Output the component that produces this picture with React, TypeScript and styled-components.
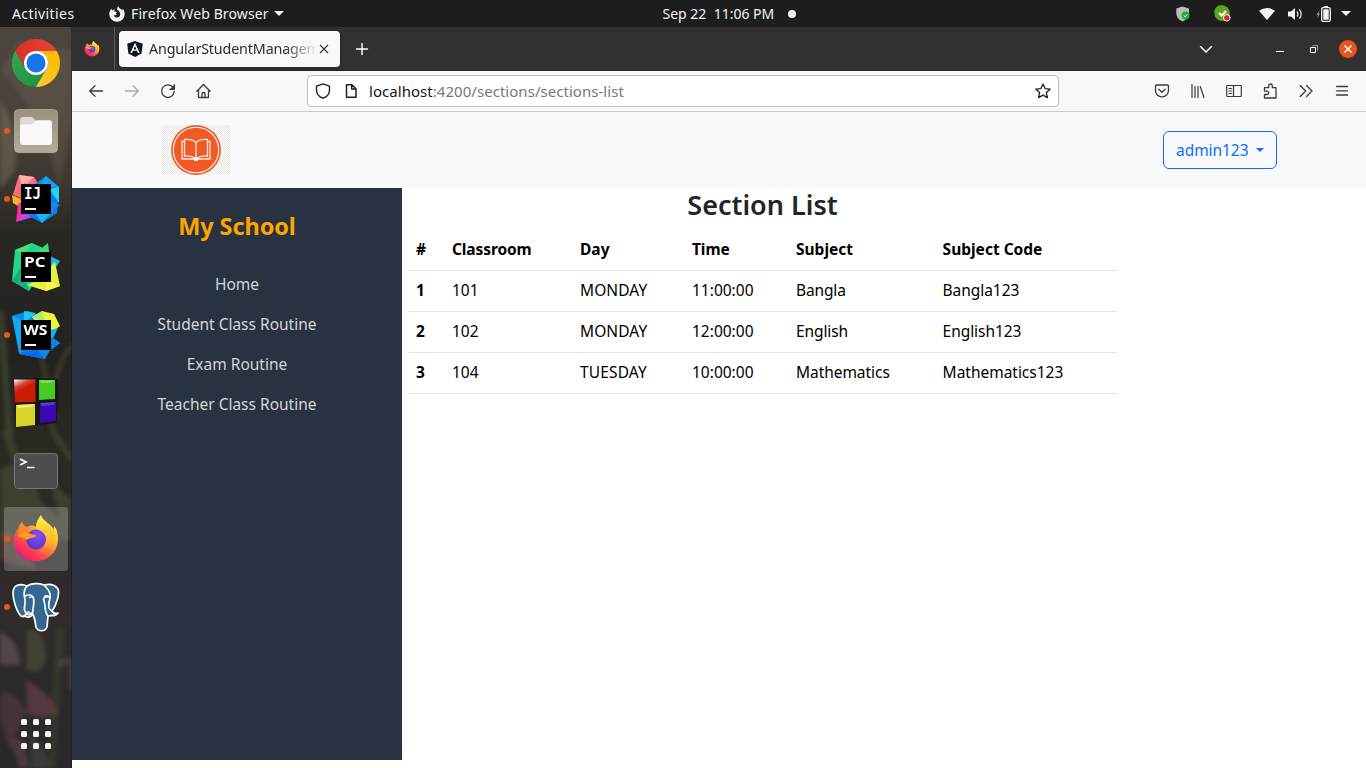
import React from 'react';
import styled, { createGlobalStyle } from 'styled-components';

const GlobalStyle = createGlobalStyle`
  *, *::before, *::after { box-sizing: border-box; }
  body {
    margin: 0;
    overflow: hidden;
    font-family: "Noto Sans", "Open Sans", sans-serif;
    font-size: 15.5px;
    color: #212529;
  }
  svg { display: block; flex: none; }
`;

/* ---------- shell ---------- */

const Desktop = styled.div`
  width: 1366px;
  height: 768px;
  display: flex;
  flex-direction: column;
  background: #fff;
`;

const Workspace = styled.div`
  flex: 1;
  display: flex;
  min-height: 0;
`;

const Label = styled.span<{ $w?: number; $track?: number }>`
  display: block;
  flex: none;
  white-space: pre;
  width: ${(p) => (p.$w ? `${p.$w}px` : 'auto')};
  letter-spacing: ${(p) => p.$track ?? 0}px;
`;

const Spacer = styled.div`
  flex: 1;
`;

/* ---------- top panel ---------- */

const TopPanel = styled.header`
  height: 27px;
  flex: none;
  display: grid;
  grid-template-columns: 1fr auto 1fr;
  align-items: center;
  background: #1d1d1d;
  color: #f2f2f2;
  font-size: 14px;
  line-height: 26px;
`;

const PanelGroup = styled.div<{ $end?: boolean }>`
  display: flex;
  align-items: center;
  justify-content: ${(p) => (p.$end ? 'flex-end' : 'flex-start')};
  padding: ${(p) => (p.$end ? '0 15px 0 0' : '0 0 0 12px')};
`;

const Clock = styled.div`
  display: flex;
  align-items: center;
  padding-left: 92px;
`;

const NoticeDot = styled.i`
  width: 8px;
  height: 8px;
  margin-left: 13px;
  border-radius: 50%;
  background: #f2f2f2;
`;

const Caret = styled.i<{ $size: number; $gap?: number }>`
  display: block;
  flex: none;
  margin-left: ${(p) => p.$gap ?? 0}px;
  border: ${(p) => p.$size}px solid transparent;
  border-top-color: currentColor;
  border-bottom: 0;
`;

const Gap = styled.div<{ $w: number }>`
  width: ${(p) => p.$w}px;
  flex: none;
`;

/* ---------- dock ---------- */

const Dock = styled.nav`
  position: relative;
  width: 72px;
  flex: none;
  display: flex;
  flex-direction: column;
  gap: 4px;
  padding: 4px 4px 2px;
  overflow: hidden;
  background: linear-gradient(#4b453f 0, #4a433c 12%, #3c3730 21%, #282722 28%, #22221f 45%, #2b2b22 58%, #292824 66%, #302c2c 80%, #2b282a 92%, #2a2828 100%);
`;

const Wallpaper = styled.svg`
  position: absolute;
  inset: 0;
`;

const DockItem = styled.div<{ $active?: boolean; $running?: boolean }>`
  position: relative;
  width: 64px;
  height: 64px;
  flex: none;
  display: flex;
  align-items: center;
  justify-content: center;
  border-radius: 3px;
  background: ${(p) => (p.$active ? 'rgba(255,255,255,.22)' : 'transparent')};

  &::before {
    content: '';
    display: ${(p) => (p.$running ? 'block' : 'none')};
    position: absolute;
    left: 0;
    top: 29px;
    width: 6px;
    height: 6px;
    border-radius: 50%;
    background: #e95420;
  }
`;

/* ---------- browser window ---------- */

const BrowserWindow = styled.main`
  flex: 1;
  display: flex;
  flex-direction: column;
  min-width: 0;
`;

const TabStrip = styled.div`
  height: 44px;
  flex: none;
  display: flex;
  align-items: center;
  background: #323031;
  border-bottom: 1px solid #262425;
  color: #fff;
`;

const PinnedTab = styled.div`
  width: 43px;
  height: 43px;
  flex: none;
  display: flex;
  align-items: center;
  padding-left: 12px;
  border-right: 1px solid #5b595a;
`;

const Tab = styled.div`
  width: 221px;
  height: 36px;
  flex: none;
  display: flex;
  align-items: center;
  margin-left: 4px;
  padding-left: 8px;
  border-radius: 4px;
  background: #f8f8f8;
  box-shadow: 0 0 3px rgba(0, 0, 0, .6);
`;

const TabTitle = styled.div`
  width: 168px;
  margin-left: 6px;
  overflow: hidden;
  white-space: nowrap;
  font-size: 14.3px;
  line-height: 22px;
  padding-top: 1px;
  color: #2b2a33;
  letter-spacing: -.15px;
  mask-image: linear-gradient(90deg, #000 136px, transparent 168px);
`;

const StripButtons = styled.div`
  display: flex;
  align-items: center;
  padding-right: 1px;
`;

const StripButton = styled.div<{ $w: number }>`
  width: ${(p) => p.$w}px;
  display: flex;
  justify-content: center;
`;

const Toolbar = styled.div`
  height: 41px;
  flex: none;
  display: flex;
  align-items: center;
  padding: 0 6px;
  background: #f8f8f8;
  border-bottom: 1px solid #ccc;
`;

const ToolButton = styled.div<{ $dim?: boolean }>`
  width: 36px;
  flex: none;
  display: flex;
  justify-content: center;
  color: #3a3a3f;
  opacity: ${(p) => (p.$dim ? 0.4 : 1)};
`;

const UrlBar = styled.div`
  width: 752px;
  height: 32px;
  flex: none;
  display: flex;
  align-items: center;
  margin-left: 85px;
  padding: 0 7px;
  border: 1px solid #bdbdbd;
  border-radius: 4px;
  background: #fff;
  font-size: 15px;
  color: #77777d;

  b {
    font-weight: 400;
    color: #15141a;
  }

  svg {
    color: #222;
  }
`;

/* ---------- page ---------- */

const PageHeader = styled.div`
  height: 76px;
  flex: none;
  display: flex;
  align-items: center;
  justify-content: space-between;
  padding: 0 89px;
  background: #f8f9fa;
`;

const UserButton = styled.button`
  width: 114px;
  height: 38px;
  display: flex;
  align-items: center;
  padding: 0 12px;
  border: 1px solid #0d6efd;
  border-radius: 6px;
  background: transparent;
  color: #0d6efd;
  font: inherit;
  text-align: left;
`;

const PageBody = styled.div`
  flex: 1;
  display: flex;
`;

const SideMenu = styled.aside`
  width: 330px;
  height: 572px;
  flex: none;
  display: flex;
  flex-direction: column;
  align-items: center;
  padding-top: 18px;
  background: #293241;
`;

const SchoolName = styled.h2`
  margin: 0 0 26px;
  font-size: 23.5px;
  line-height: 40px;
  font-weight: 700;
  letter-spacing: -.1px;
  color: orange;
`;

const MenuLink = styled.a`
  height: 40px;
  line-height: 24px;
  color: #d3d5d9;
`;

const Content = styled.section`
  width: 709px;
  margin-left: 6px;
`;

const Heading = styled.h3`
  margin: 0;
  height: 41px;
  line-height: 34px;
  text-align: center;
  font-size: 27px;
  font-weight: 600;
  letter-spacing: 0;
`;

const Row = styled.div<{ $head?: boolean }>`
  display: grid;
  grid-template-columns: 36px 128px 112px 104px 146.6px 1fr;
  height: ${(p) => (p.$head ? 42 : 41)}px;
  border-bottom: 1px solid #dee2e6;
  line-height: ${(p) => (p.$head ? 40 : 38)}px;
  color: #000;
  font-weight: ${(p) => (p.$head ? 700 : 400)};
`;

const Cell = styled.div<{ $bold?: boolean; $track?: number }>`
  padding-left: 8px;
  white-space: nowrap;
  font-weight: ${(p) => (p.$bold ? 700 : 'inherit')};
  letter-spacing: ${(p) => p.$track ?? 0}px;
`;

/* ---------- drawings ---------- */

const ChromeIcon = () => (
  <svg width="48" height="48" viewBox="0 0 48 48">
    <defs>
      <linearGradient id="chr" x1="0" x2="1"><stop stopColor="#d93025" /><stop offset="1" stopColor="#ea4335" /></linearGradient>
      <linearGradient id="chg" x1="1" y1="1" x2="0" y2="0"><stop stopColor="#1e8e3e" /><stop offset="1" stopColor="#34a853" /></linearGradient>
      <linearGradient id="chy" x1="0" y1="1" x2=".6" y2="0"><stop stopColor="#fcc934" /><stop offset="1" stopColor="#fbbc04" /></linearGradient>
    </defs>
    <path fill="url(#chr)" d="M24 12H44.78A24 24 0 0 0 3.215 12L13.6 30A12 12 0 0 1 24 12z" />
    <path fill="url(#chg)" d="M34.4 30L24 48A24 24 0 0 1 3.215 12L13.6 30A12 12 0 0 0 34.4 30z" />
    <path fill="url(#chy)" d="M34.4 30A12 12 0 0 0 24 12H44.78A24 24 0 0 1 24 48z" />
    <circle cx="24" cy="24" r="12" fill="#fff" />
    <circle cx="24" cy="24" r="9.5" fill="#1a73e8" />
  </svg>
);

const FilesIcon = () => (
  <svg width="46" height="46" viewBox="0 0 46 46">
    <defs>
      <linearGradient id="fl" x2="0" y2="1"><stop stopColor="#989180" /><stop offset="1" stopColor="#b1ab9a" /></linearGradient>
    </defs>
    <rect x="1" y="1.5" width="44" height="44" rx="4.5" fill="#4f4a40" />
    <rect x="1.5" y="1.5" width="43" height="43" rx="4" fill="url(#fl)" stroke="#c4bfb2" strokeOpacity=".6" />
    <path d="M7 11.5q0-2.500 2.500-2.500h9q1.500 0 2.500 1.500l1.500 2v6H7z" fill="#dedacf" />
    <path d="M7 18q0-1.800 2-1.800h8.500q1.500 0 2.500-1l2-2.200q.8-.8 2-.8h12.500q2.500 0 2.500 2.500V34q0 3-3 3H10q-3 0-3-3z" fill="#faf9f7" />
  </svg>
);

const IdeIcon = ({ name, children }: { name: string; children: React.ReactNode }) => (
  <svg width="48" height="48" viewBox="0 0 48 48">
    {children}
    <rect x="9" y="9" width="30" height="30" fill="#000" />
    <text
      x={name === 'WS' ? 11.5 : 12} y="23.500" fill="#fff" fontSize="15" fontWeight="700"
      fontFamily={name === 'IJ' ? '"DejaVu Sans Mono", monospace' : '"Open Sans", sans-serif'}
      textLength={name === 'IJ' ? 17 : name === 'PC' ? 21.5 : 24}
      lengthAdjust="spacingAndGlyphs"
    >
      {name}
    </text>
    <rect x="13" y="33" width="11" height="2" fill="#fff" />
  </svg>
);

const IntelliJ = () => (
  <IdeIcon name="IJ">
    <path d="M7 0L22 2 27 10 14 24 1 20z" fill="#fc6d8d" />
    <path d="M7 0L22 2 10 13z" fill="#ffb0a8" />
    <path d="M1 19L14 7 14 26z" fill="#fd6a6a" />
    <path d="M0 20L12 25 6 31 1 28z" fill="#fcb12c" />
    <path d="M6 29L12 26 26 40 4 47z" fill="#f52fa0" />
    <path d="M12 34L28 40 7 46z" fill="#b04cf5" />
    <path d="M24 8L34 1 47 12 45 38 30 48 17 41z" fill="#0a7ef0" />
    <path d="M34 1L47 12 36 12 28 9z" fill="#12a2ef" />
    <path d="M37 14L47 12 47 28z" fill="#22d3f5" />
    <path d="M38 25L48 30 36 40z" fill="#1c83f0" />
    <path d="M24 39L40 37 30 48z" fill="#19b6f1" />
  </IdeIcon>
);

const PyCharm = () => (
  <IdeIcon name="PC">
    <path d="M3 7L20 0 31 5 22 40 17 48 0 38z" fill="#21d789" />
    <path d="M3 7L20 0 12 12z" fill="#48e07b" />
    <path d="M0 38L9 24 17 48z" fill="#18ae80" />
    <path d="M25 9L36 0 38 16 26 14z" fill="#3ddc68" />
    <path d="M38 13L48 18 39 32z" fill="#14b9ed" />
    <path d="M39 23L43 19 48 43 34 48 15 42 24 38z" fill="#e4f33f" />
    <path d="M34 38L48 43 34 48z" fill="#fcf84a" />
  </IdeIcon>
);

const WebStorm = () => (
  <IdeIcon name="WS">
    <path d="M0 5L16 0 28 5 38 39 33 48 7 43z" fill="#0b8cef" />
    <path d="M0 5L12 10 8 43z" fill="#12aaf0" />
    <path d="M12 0L24 2 12 12z" fill="#17c9e8" />
    <path d="M7 43L24 37 33 48z" fill="#076de8" />
    <path d="M20 6L30 0 42 3 48 15 36 24z" fill="#ecf43d" />
    <path d="M20 6L30 0 33 12z" fill="#a5ec70" />
    <path d="M39 19L46 17 41 27 48 32 36 41z" fill="#12b4f0" />
    <path d="M39 26L48 32 36 41z" fill="#0a84ea" />
  </IdeIcon>
);

const BlocksIcon = () => (
  <svg width="48" height="50" viewBox="0 0 48 50">
    <defs>
      <linearGradient id="br" x2=".5" y2="1"><stop stopColor="#fff" /><stop offset=".32" stopColor="#d84434" /><stop offset=".5" stopColor="#cc1c08" /></linearGradient>
    </defs>
    <path d="M2 1L24 0 46 1 46 24 45 45 4 49z" fill="#17170f" />
    <path d="M2 1.500L23.500 1.500 23.500 24 3 24.500z" fill="url(#br)" />
    <path d="M27 2L43 2 43 21 27 22z" fill="#46cc20" />
    <path d="M27 2L43 2 39 5 30 5z" fill="#77dc55" />
    <path d="M4 27L23 26 23 47 4 49z" fill="#d8d52a" />
    <path d="M4 27L23 26 20 29 7 30z" fill="#eeec75" />
    <path d="M28 25L44 24 44 43 28 45z" fill="#3a08b8" />
    <path d="M28 25L44 24 41 27 30 28z" fill="#6038cc" />
  </svg>
);

const TerminalIcon = () => (
  <svg width="46" height="38" viewBox="0 0 46 38">
    <rect x="1" y="1" width="44" height="36" rx="3.500" fill="#2e2e2e" />
    <rect x="1.500" y="1.500" width="43" height="35" rx="3" fill="#4d4d4d" stroke="#777" />
    <path d="M7 7l6 3-6 3M14 15.500h7.500" fill="none" stroke="#fff" strokeWidth="1.700" />
  </svg>
);

const FirefoxIcon = ({ size, id }: { size: number; id: string }) => (
  <svg width={size} height={size} viewBox="0 1 48 48">
    <defs>
      <linearGradient id={`${id}a`} x1=".85" y1=".1" x2=".2" y2=".95">
        <stop stopColor="#fff44f" /><stop offset=".3" stopColor="#ffbd2a" /><stop offset=".55" stopColor="#ff7139" />
        <stop offset=".8" stopColor="#ff3750" /><stop offset="1" stopColor="#e31587" />
      </linearGradient>
      <radialGradient id={`${id}b`} cx=".6" cy=".25" r=".8">
        <stop stopColor="#8a4df0" /><stop offset=".5" stopColor="#7040e0" /><stop offset="1" stopColor="#5b2fce" />
      </radialGradient>
      <linearGradient id={`${id}c`} x1=".5" x2=".5" y2="1">
        <stop stopColor="#fff14c" /><stop offset=".5" stopColor="#ffc52e" /><stop offset="1" stopColor="#ff9a2c" stopOpacity="0" />
      </linearGradient>
    </defs>
    <path fill={`url(#${id}a)`} d="M29 1C27 5 24 8 24 13C20 10 17 12 15 13C12 12 11 11 10 8C8 10 7 12 6.500 14C3 18 1.500 22 1.800 27C2 39 12 47 24 47C37 47 46 37 46 25C46 20 45 15 42 12C42 14 42 15 42 16C40 10 30 7 29 1z" />
    <path fill={`url(#${id}c)`} d="M29 1C26 5 23 10 25 15C31 19 33 23 33 28C33 34 28 39 22 40C34 43 43 34 43.500 25C43.600 20 42 16 40.500 14C37 9 30 7 29 1z" />
    <circle cx="24" cy="25.500" r="10" fill={`url(#${id}b)`} />
    <path fill="#ff9a1f" d="M6.500 20C10 17 17 18 20 20.500C24 20.500 25 22 23 23C20 24 17 24.500 15 26C13 25 11 23 6.500 23z" />
    <path fill="#ff8a29" d="M10 8C11 11 13 13 16 13C14 14 13 16 13 18L6.500 20C5 17 8 11 10 8z" />
  </svg>
);

const PostgresIcon = () => (
  <svg width="50" height="50" viewBox="0 0 50 50" stroke="#fff" strokeWidth="1.700" strokeLinejoin="round" strokeLinecap="round">
    <path fill="#336791" d="M16 4C9 .8 2 3 2 11C2 19 6 30 10 34C13 36 15 33 17 30L22 33C24 36 24 40 25 45C27 50 34 50 36 45L37 34C40 33 45 35 47 31C44 32 42 31 41 29C45 24 49 12 47 7C43 1 37 2 33 3C28 1 20 1 16 4z" />
    <path fill="none" d="M16 4C12 8 13 13 14 18C15 24 11 26 15 31C17 34 21 33 22 29C22 24 24 18 22 15C20 12 16 12 13.500 15M33 3C38 8 41 12 38 20C37 25 38 28 41 29M38 15C34 12 32 16 33 19C35 24 33 30 37 34M13 34C17 36 21 35 22 32" />
    <path d="M18.500 15.300h1.500M34.500 15h1.500" strokeWidth="1.500" />
  </svg>
);

const AppsGrid = () => (
  <svg width="30" height="30" viewBox="0 0 30 30" fill="#f3f3f3">
    {[0, 12, 24].map((y) => [0, 12, 24].map((x) => <rect key={`${x}-${y}`} x={x} y={y} width="6" height="6" rx="1.500" />))}
  </svg>
);

const Line = ({ d, size = 16, w = 1.3, fill }: { d: string; size?: number; w?: number; fill?: string }) => (
  <svg width={size} height={size} viewBox={`0 0 ${size} ${size}`} fill="none" stroke="currentColor" strokeWidth={w} strokeLinecap="round" strokeLinejoin="round">
    <path d={d} />
    {fill && <path d={fill} fill="currentColor" stroke="none" />}
  </svg>
);

const AngularIcon = () => (
  <svg width="16" height="16" viewBox="0 0 16 16">
    <path d="M8 0L15.800 2.700 14.600 12.600 8 16 1.400 12.600.2 2.700z" fill="#0d1520" />
    <path d="M8 1.800L3.300 12.100h1.800l.9-2.300h4l.9 2.300h1.800zM8 5.100l1.400 3.300H6.600z" fill="#fff" fillRule="evenodd" />
  </svg>
);

const LogoIcon = () => (
  <svg width="70" height="50" viewBox="0 0 70 50">
    <defs>
      <pattern id="chk" width="2" height="2" patternUnits="userSpaceOnUse">
        <rect width="2" height="2" fill="#f7f7f5" /><rect width="1" height="1" fill="#ececea" /><rect x="1" y="1" width="1" height="1" fill="#ececea" />
      </pattern>
    </defs>
    <rect width="70" height="50" fill="url(#chk)" />
    <circle cx="35" cy="25" r="25" fill="#f15a24" />
    <circle cx="35" cy="25" r="22.700" fill="none" stroke="#fff" strokeWidth="1.100" />
    <path d="M35 17.500C32 14.500 27 14 23.500 14.500V31C28 30.500 32 31.500 35 33.500C38 31.500 42 30.500 46.500 31V14.500C43 14 38 14.500 35 17.500zV33.500M23.500 16.500H21V34H33Q35 36 37 34H49V16.500H46.500" fill="none" stroke="#ffe9df" strokeWidth="1.300" />
    <path d="M32 33.500H38L36.500 36H33.500z" fill="#fff" />
  </svg>
);

const PanelFirefox = () => (
  <svg width="16" height="16" viewBox="0 0 16 16">
    <path fill="#f2f2f2" d="M9.200 0C8.500 1.200 8 2.200 8.200 3.700C9.500 4.300 11.200 5.500 11.200 8A3.300 3.300 0 0 1 4.700 9C6 9.600 7 9.400 7.800 8.600C6.500 8.300 6.600 7 8 6.600C7.500 5.800 6.500 5.300 5.200 5.400C5.200 4.500 5.600 4 6 3.300C4.800 3.500 4 3.900 3.400 4.500C2.800 4 2.600 3.200 2.700 2.400C1.200 3.800.3 5.800.3 8A7.700 7.700 0 0 0 15.700 8.300C15.800 5.700 14.800 3.600 13.500 2.800L13.700 4.500C12.400 2.800 9.600 2.500 9.200 0z" />
  </svg>
);

const ShieldTray = () => (
  <svg width="14" height="16" viewBox="0 0 14 16">
    <path d="M6.500.5L13 2.500V7C13 11 10 14 6.500 15.500C3 14 .3 11 .3 7V2.500z" fill="#b9bdbb" />
    <circle cx="9.500" cy="9.500" r="4" fill="#27a83c" />
    <path d="M7.700 9.500l1.400 1.300 2.300-2.500" fill="none" stroke="#fff" />
  </svg>
);

const SkypeTray = () => (
  <svg width="17" height="17" viewBox="0 0 17 17">
    <path d="M5 .5C8-.3 14 .5 15.500 6C16.500 11 15 16 9 16C3 16 .5 12 .8 9C0 7 .3 2 5 .5z" fill="#5ea51c" />
    <path d="M5 8l2.800 2.500L12 6" fill="none" stroke="#fff" strokeWidth="2" />
    <circle cx="12.800" cy="12.800" r="3.300" fill="#e3202c" stroke="#fff" />
  </svg>
);

const WifiTray = () => (
  <svg width="16" height="12" viewBox="0 0 16 12"><path d="M0 2.800Q8-2.800 16 2.800L8 12z" fill="#f2f2f2" /></svg>
);

const VolumeTray = () => (
  <svg width="15" height="14" viewBox="0 0 15 14">
    <path d="M0 4.500h3L7 1v12L3 9.500H0z" fill="#f2f2f2" />
    <path d="M9 4.500Q10.800 7 9 9.500M11.300 2.300Q15 7 11.300 11.700" fill="none" stroke="#ddd" strokeWidth="1.300" />
  </svg>
);

const BatteryTray = () => (
  <svg width="15" height="16" viewBox="0 0 15 16">
    <path d="M3.500 4L.5 9H2L1.200 12.500 4 7.500H2.500z" fill="#999" />
    <path d="M8 0h4v2H8z" fill="#f2f2f2" />
    <rect x="5.700" y="1.700" width="8.600" height="13.600" rx="1.200" fill="none" stroke="#f2f2f2" strokeWidth="1.300" />
    <path d="M7.300 3.300h5.400v10.400H7.300z" fill="#f2f2f2" />
  </svg>
);

/* ---------- data ---------- */

type Txt = [string, number?];

const columns: Txt[] = [['#'], ['Classroom', -0.1], ['Day', 0], ['Time', -0.1], ['Subject', 0], ['Subject Code', 0]];

const sections: Txt[][] = [
  [['1'], ['101'], ['MONDAY', 0.1], ['11:00:00'], ['Bangla', -0.15], ['Bangla123', -0.05]],
  [['2'], ['102'], ['MONDAY', 0.1], ['12:00:00'], ['English', -0.1], ['English123', -0.05]],
  [['3'], ['104'], ['TUESDAY', 0.15], ['10:00:00'], ['Mathematics', -0.05], ['Mathematics123', -0.02]],
];

const menu = ['Home', 'Student Class Routine', 'Exam Routine', 'Teacher Class Routine'];

const DockWallpaper = () => (
  <Wallpaper width="72" height="741" viewBox="0 27 72 741">
    <defs><filter id="soft"><feGaussianBlur stdDeviation="2" /></filter></defs>
    <g filter="url(#soft)">
      <path d="M0 70Q40 110 60 190L72 120V50L20 40z" fill="#7b6c5a" opacity=".25" />
      <path d="M0 100Q20 130 15 170L0 190z" fill="#837360" opacity=".45" />
      <path d="M72 345Q50 370 52 430L72 460M40 350L55 420" stroke="#6b6040" strokeWidth="5" fill="none" opacity=".35" />
      <path d="M0 310L10 440M5 430L20 470" stroke="#56603c" strokeWidth="7" opacity=".45" />
      <path d="M0 470Q30 450 40 500L60 520 50 480 72 500V540H0z" fill="#6d7050" opacity=".3" />
      <path d="M0 530Q30 545 35 570L0 560z" fill="#8b4d50" opacity=".35" />
      <path d="M0 632Q20 640 20 665L0 665z" fill="#8a6f74" opacity=".4" />
      <path d="M27 630Q45 625 46 660Q40 678 26 668z" fill="#64644c" opacity=".4" />
      <path d="M26 680Q45 690 59 710Q50 722 27 714z" fill="#8d535a" opacity=".42" />
      <path d="M0 693Q18 690 26 712L10 750 0 720z" fill="#74474f" opacity=".35" />
      <path d="M10 740L20 768H30L22 738z" fill="#8a5560" opacity=".35" />
      <path d="M30 735Q45 745 50 768H32z" fill="#5a5562" opacity=".4" />
      <path d="M60 628L52 768" stroke="#465034" strokeWidth="8" opacity=".35" />
      <path d="M58 665Q72 655 72 665V690" stroke="#8a6670" strokeWidth="5" opacity=".35" fill="none" />
    </g>
    <path d="M71.500 27V768" stroke="#111" opacity=".4" />
  </Wallpaper>
);

export default function App() {
  return (
    <Desktop>
      <GlobalStyle />
      <TopPanel>
        <PanelGroup>
          <Label $w={97} $track={0.42}>Activities</Label>
          <PanelFirefox />
          <Gap $w={6} />
          <Label $w={138} $track={0.12}>Firefox Web Browser</Label>
          <Caret $size={5} $gap={5} />
        </PanelGroup>
        <Clock>
          <Label $w={112} $track={0}>{'Sep 22  11:06 PM'}</Label>
          <NoticeDot />
        </Clock>
        <PanelGroup $end>
          <ShieldTray />
          <Gap $w={24} />
          <SkypeTray />
          <Gap $w={28} />
          <WifiTray />
          <Gap $w={13} />
          <VolumeTray />
          <Gap $w={13} />
          <BatteryTray />
          <Caret $size={5} $gap={10} />
        </PanelGroup>
      </TopPanel>

      <Workspace>
        <Dock>
          <DockWallpaper />
          <DockItem><ChromeIcon /></DockItem>
          <DockItem $running><FilesIcon /></DockItem>
          <DockItem $running><IntelliJ /></DockItem>
          <DockItem><PyCharm /></DockItem>
          <DockItem $running><WebStorm /></DockItem>
          <DockItem><BlocksIcon /></DockItem>
          <DockItem><TerminalIcon /></DockItem>
          <DockItem $active $running><FirefoxIcon size={48} id="dock" /></DockItem>
          <DockItem $running><PostgresIcon /></DockItem>
          <Spacer />
          <DockItem><AppsGrid /></DockItem>
        </Dock>

        <BrowserWindow>
          <TabStrip>
            <PinnedTab><FirefoxIcon size={16} id="pin" /></PinnedTab>
            <Tab>
              <AngularIcon />
              <TabTitle>AngularStudentManagement</TabTitle>
              <Gap $w={2} />
              <svg width="10" height="10" viewBox="0 0 10 10" stroke="#333" strokeWidth="1.100"><path d="M1 1l8 8M9 1l-8 8" /></svg>
            </Tab>
            <Gap $w={14} />
            <Line d="M8 2.500v11M2.500 8h11" w={1.4} />
            <Spacer />
            <StripButtons>
              <StripButton $w={36}><Line d="M2.500 5.500L8 11l5.500-5.500" w={1.5} /></StripButton>
              <Gap $w={39} />
              <StripButton $w={34}>
                <Line d="M4.500 10.500h7" w={1.2} />
              </StripButton>
              <StripButton $w={34}>
                <svg width="16" height="16" viewBox="0 0 16 16" fill="none" stroke="#fff"><path d="M4.500 6.500h5v5h-5z" /><path d="M6.500 4.500h5v5" opacity=".5" /></svg>
              </StripButton>
              <StripButton $w={34}>
                <svg width="18" height="18" viewBox="0 0 18 18"><circle cx="9" cy="9" r="9" fill="#e95420" /><path d="M5.500 5.500l7 7M12.500 5.500l-7 7" stroke="#fff" strokeWidth="1.500" /></svg>
              </StripButton>
            </StripButtons>
          </TabStrip>

          <Toolbar>
            <ToolButton><Line d="M14.500 8H1.800M7 2.700L1.700 8 7 13.300" /></ToolButton>
            <ToolButton $dim><Line d="M1.500 8h12.700M9 2.700L14.300 8 9 13.300" /></ToolButton>
            <ToolButton><Line d="M14.200 8.500A6.300 6.300 0 1 1 12.500 3.800M14.300 2v4.300H10" fill="M14.800 1.200v5.500H9.300z" /></ToolButton>
            <ToolButton><Line d="M.9 8.200L7.500 1.500l6.600 6.700M2.500 6.800V14.500H12.500V6.800M6 14.500V11Q6 9.500 7.500 9.500T9 11V14.500" /></ToolButton>
            <UrlBar>
              <Line d="M8 .9L14.500 3.200V7C14.500 11 11.500 14 8 15.200C4.500 14 1.500 11 1.500 7V3.200z" w={1.4} />
              <Gap $w={12} />
              <Line d="M3.500 1.700H9L13 5.700V14.300H3.500zM8.700 2V6H13" w={1.5} />
              <Gap $w={10} />
              <Label $track={0.04}><b>localhost</b>:4200/sections/sections-list</Label>
              <Spacer />
              <Line d="M8 1l2.100 4.600 5 .6-3.700 3.400 1 5L8 12.100 3.600 14.600l1-5L.9 6.200l5-.6z" w={1.3} />
            </UrlBar>
            <Spacer />
            <ToolButton><Line d="M2.500 2h11Q14.500 2 14.500 3V7.500A6.500 6.300 0 0 1 1.500 7.500V3Q1.500 2 2.500 2zM4.800 6.300L8 9.300l3.200-3" /></ToolButton>
            <ToolButton><Line d="M2 1.500v13M5 3.500v11M8 3.500v11M10.300 3.500L14 14.500" w={1.2} /></ToolButton>
            <ToolButton><Line d="M1.500 2.500h13q.8 0 .8.800v9.400q0 .8-.8.800h-13q-.8 0-.8-.8V3.300q0-.8.800-.8zM7.500 2.500v11M3 5.500h2.500M3 8h2.500M3 10.500h2.500" w={1.2} /></ToolButton>
            <ToolButton><Line d="M6.700 4.700V2.800a1.800 1.800 0 0 1 3.600 0V4.700H14V15H2.500V11.500H5a1.700 1.700 0 0 0 0-3.400H2.500V4.700z" /></ToolButton>
            <ToolButton><Line d="M2.200 2.500L7.700 8l-5.500 5.500M8.500 2.500L14 8l-5.500 5.500" /></ToolButton>
            <ToolButton><Line d="M2.500 3.500h11M2.500 7.800h11M2.500 12h11" /></ToolButton>
          </Toolbar>

          <PageHeader>
            <LogoIcon />
            <UserButton>
              <Label $w={80} $track={-0.05}>admin123</Label>
              <Caret $size={4.5} />
            </UserButton>
          </PageHeader>

          <PageBody>
            <SideMenu>
              <SchoolName>My School</SchoolName>
              {menu.map((text) => <MenuLink key={text}>{text}</MenuLink>)}
            </SideMenu>
            <Content>
              <Heading>Section List</Heading>
              <Row $head>
                {columns.map(([text, track]) => <Cell key={text} $track={track}>{text}</Cell>)}
              </Row>
              {sections.map((row) => (
                <Row key={row[0][0]}>
                  {row.map(([text, track], i) => <Cell key={i} $bold={i === 0} $track={track}>{text}</Cell>)}
                </Row>
              ))}
            </Content>
          </PageBody>
        </BrowserWindow>
      </Workspace>
    </Desktop>
  );
}
